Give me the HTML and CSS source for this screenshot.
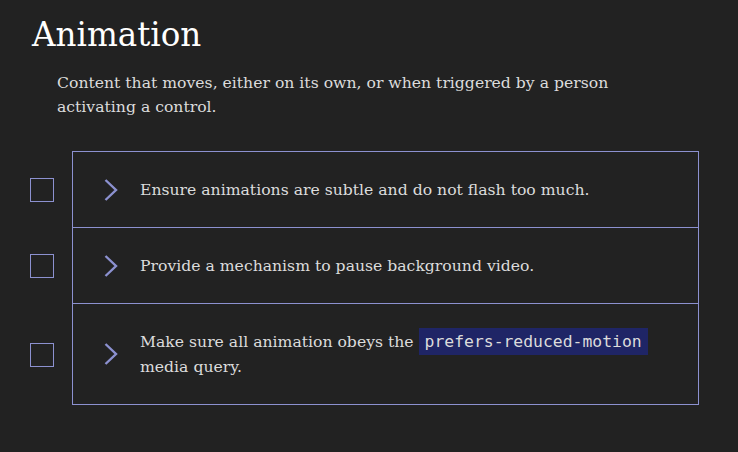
FILE: index.html
```html
<!DOCTYPE html>
<html lang="en">
<head>
<meta charset="utf-8">
<title>Animation</title>
<link rel="stylesheet" href="styles.css">
</head>
<body>
<main class="section">
  <h1 class="title">Animation</h1>
  <p class="intro">Content that moves, either on its own, or when triggered by a person activating a control.</p>
  <ul class="checklist">
    <li class="item">
      <span class="check"></span>
      <div class="row">
        <svg class="chev" viewBox="0 0 14 22" width="14" height="22"><path d="M1.5 1 L12 11 L1.5 21" fill="none" stroke="#8c91d0" stroke-width="2.4"/></svg>
        <div class="text">Ensure animations are subtle and do not flash too much.</div>
      </div>
    </li>
    <li class="item">
      <span class="check"></span>
      <div class="row">
        <svg class="chev" viewBox="0 0 14 22" width="14" height="22"><path d="M1.5 1 L12 11 L1.5 21" fill="none" stroke="#8c91d0" stroke-width="2.4"/></svg>
        <div class="text">Provide a mechanism to pause background video.</div>
      </div>
    </li>
    <li class="item">
      <span class="check"></span>
      <div class="row">
        <svg class="chev" viewBox="0 0 14 22" width="14" height="22"><path d="M1.5 1 L12 11 L1.5 21" fill="none" stroke="#8c91d0" stroke-width="2.4"/></svg>
        <div class="text">Make sure all animation obeys the <code class="code">prefers-reduced-motion</code><br>media query.</div>
      </div>
    </li>
  </ul>
</main>
</body>
</html>
```

FILE: styles.css
```css
html, body {
  margin: 0;
  padding: 0;
  background: #222222;
}
body {
  font-family: "DejaVu Serif", "Liberation Serif", serif;
  color: #dcdcdc;
}
.section {
  padding: 13px 39px 0 30px;
}
.title {
  margin: 0 0 0 2px;
  font-size: 32.6px;
  font-weight: normal;
  line-height: 44px;
  color: #ffffff;
}
.intro {
  margin: 14px 0 0 27px;
  font-size: 15.65px;
  line-height: 24px;
  max-width: 600px;
}
.checklist {
  list-style: none;
  margin: 32px 0 0 0;
  padding: 0;
}
.item {
  display: flex;
  align-items: center;
}
.check {
  flex: none;
  width: 22px;
  height: 22px;
  border: 1px solid #8c91d0;
  margin-right: 18px;
}
.row {
  flex: 1;
  display: flex;
  align-items: center;
  border: 1px solid #8c91d0;
  border-top: none;
  padding: 25px 20px 25px 31px;
  font-size: 15.65px;
  line-height: 25px;
}
.item:first-child .row {
  border-top: 1px solid #8c91d0;
}
.chev {
  flex: none;
  margin-right: 22px;
}
.code {
  font-family: "DejaVu Sans Mono", "Liberation Mono", monospace;
  font-size: 16.4px;
  line-height: 1;
  background: #1f2566;
  color: #dcdcdc;
  padding: 4px 6px;
  margin-left: 0;
}
```
